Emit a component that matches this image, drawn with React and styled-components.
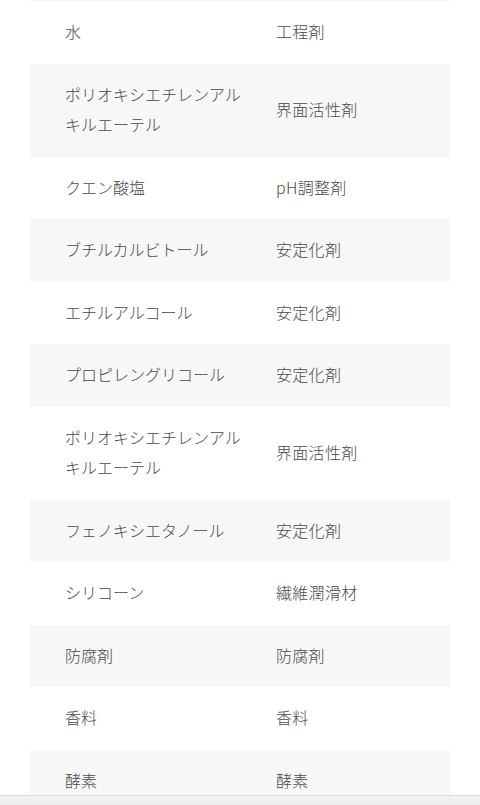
import styled, { createGlobalStyle } from 'styled-components'

const GlobalStyle = createGlobalStyle`
  html, body {
    margin: 0;
    padding: 0;
    background: #fff;
  }
  body {
    font-family: "Noto Sans CJK JP", "Noto Sans", sans-serif;
    color: #4a4a4a;
    overflow: hidden;
  }
`

const Page = styled.div`
  padding: 0 30px;
`

const Table = styled.div`
  display: flex;
  flex-direction: column;
  border-top: 1px solid #f7f7f7;
`

const Row = styled.div`
  display: grid;
  grid-template-columns: 55% 45%;
  align-items: center;
  background-color: ${props => (props.$shaded ? '#f7f7f7' : '#fff')};
`

const Name = styled.div`
  padding: 15px 15px 17px 35px;
  font-size: 16px;
  font-weight: 300;
  line-height: 30.5px;
`

const Role = styled.div`
  padding: 15px 15px 17px;
  font-size: 16px;
  font-weight: 300;
  line-height: 30.5px;
  letter-spacing: 0.3px;
`

const BottomBar = styled.div`
  position: fixed;
  left: 0;
  right: 0;
  bottom: 0;
  height: 9px;
  border-top: 1px solid #dadada;
  background: linear-gradient(#f3f3f3, #ececec);
`

const ingredients = [
  ['水', '工程剤'],
  ['ポリオキシエチレンアルキルエーテル', '界面活性剤'],
  ['クエン酸塩', 'pH調整剤'],
  ['ブチルカルビトール', '安定化剤'],
  ['エチルアルコール', '安定化剤'],
  ['プロピレングリコール', '安定化剤'],
  ['ポリオキシエチレンアルキルエーテル', '界面活性剤'],
  ['フェノキシエタノール', '安定化剤'],
  ['シリコーン', '繊維潤滑材'],
  ['防腐剤', '防腐剤'],
  ['香料', '香料'],
  ['酵素', '酵素'],
]

const App = () => {
  return (
    <>
      <GlobalStyle />
      <Page>
        <Table>
          {ingredients.map(([name, role], i) => (
            <Row key={i} $shaded={i % 2 === 1}>
              <Name>{name}</Name>
              <Role>{role}</Role>
            </Row>
          ))}
        </Table>
      </Page>
      <BottomBar />
    </>
  )
}

export default App
